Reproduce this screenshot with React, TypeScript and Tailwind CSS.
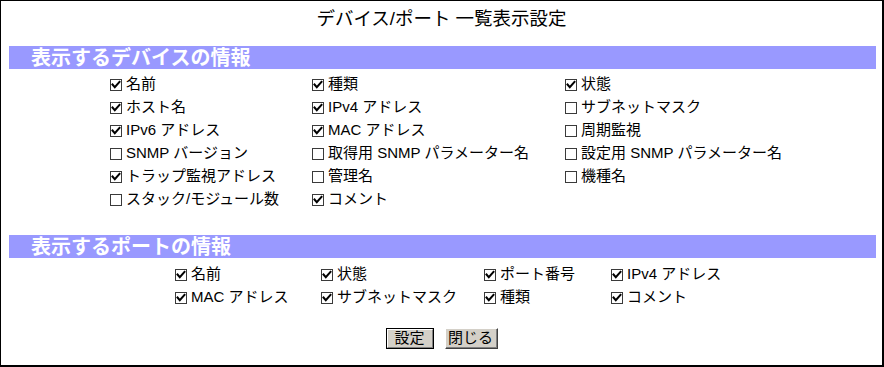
import React from 'react'

const FONT = { fontFamily: '"Liberation Sans", "Noto Sans CJK JP", sans-serif' }

const deviceItems: [string, boolean][] = [
  ['名前', true], ['種類', true], ['状態', true],
  ['ホスト名', true], ['IPv4 アドレス', true], ['サブネットマスク', false],
  ['IPv6 アドレス', true], ['MAC アドレス', true], ['周期監視', false],
  ['SNMP バージョン', false], ['取得用 SNMP パラメーター名', false], ['設定用 SNMP パラメーター名', false],
  ['トラップ監視アドレス', true], ['管理名', false], ['機種名', false],
  ['スタック/モジュール数', false], ['コメント', true], ['', false],
]

const portItems: [string, boolean][] = [
  ['名前', true], ['状態', true], ['ポート番号', true], ['IPv4 アドレス', true],
  ['MAC アドレス', true], ['サブネットマスク', true], ['種類', true], ['コメント', true],
]

function Box({ checked }: { checked: boolean }) {
  return (
    <svg width="12" height="12" viewBox="0 0 12 12" className="shrink-0">
      <rect x="0.5" y="0.5" width="11" height="11" fill="white" stroke="#3a3a3a" />
      {checked && (
        <path d="M2.5 5.5 L4.8 8.2 L9.5 2.8" fill="none" stroke="#000" strokeWidth="2" strokeLinecap="square" />
      )}
    </svg>
  )
}

function Item({ label, checked }: { label: string; checked: boolean }) {
  if (!label) return <div className="h-[23px]" />
  return (
    <div className="h-[23px] flex items-center gap-[4px] text-[15px] text-black whitespace-nowrap">
      <Box checked={checked} />
      <span>{label}</span>
    </div>
  )
}

function SectionBar({ title }: { title: string }) {
  return (
    <div className="ml-[8px] w-[867px] h-[23px] bg-[#9999ff] flex items-center pl-[22px]">
      <span className="text-white font-bold text-[20px] leading-none">{title}</span>
    </div>
  )
}

export default function App() {
  return (
    <div
      style={FONT}
      className="w-[884px] h-[367px] bg-white border-t border-l border-r-2 border-b-2 border-black flex flex-col"
    >
      {/* Title */}
      <div className="h-[36px] flex items-center justify-center text-[18.5px] text-black">
        デバイス/ポート 一覧表示設定
      </div>

      {/* Device info */}
      <div className="mt-[9px]">
        <SectionBar title="表示するデバイスの情報" />
      </div>
      <div className="pt-[4px] ml-[109px] grid grid-cols-[202px_253px_1fr]">
        {deviceItems.map(([label, checked], i) => (
          <Item key={i} label={label} checked={checked} />
        ))}
      </div>

      {/* Port info */}
      <div className="mt-[24px]">
        <SectionBar title="表示するポートの情報" />
      </div>
      <div className="pt-[5px] ml-[174px] grid grid-cols-[146px_163px_127px_1fr]">
        {portItems.map(([label, checked], i) => (
          <Item key={i} label={label} checked={checked} />
        ))}
      </div>

      {/* Buttons */}
      <div className="mt-[19px] flex justify-center gap-[11px] text-[15px] text-black">
        <button className="w-[48px] h-[21px] border border-black bg-[#d4d0c8] flex items-center justify-center">
          <span className="w-full h-full flex items-center justify-center border-t border-l border-white border-r border-b border-r-[#808080] border-b-[#808080]">
            設定
          </span>
        </button>
        <button className="w-[53px] h-[21px] bg-[#d4d0c8] flex items-center justify-center border-t border-l border-white border-r border-b border-r-[#404040] border-b-[#404040]">
          <span className="w-full h-full flex items-center justify-center border-r border-b border-[#808080]">
            閉じる
          </span>
        </button>
      </div>
    </div>
  )
}
